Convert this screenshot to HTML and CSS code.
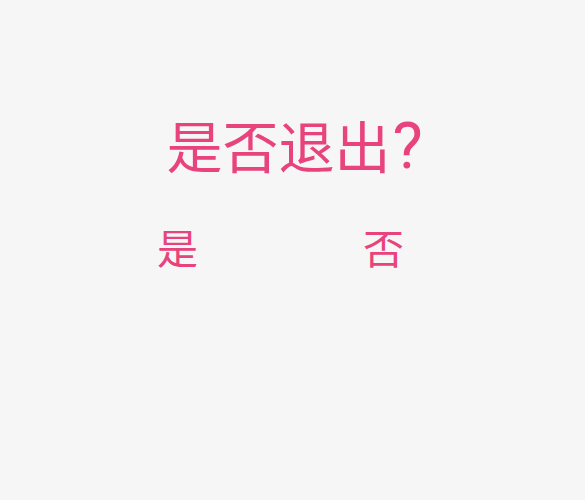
FILE: index.html
```html
<!DOCTYPE html>
<html lang="zh-CN">
<head>
<meta charset="utf-8">
<link rel="stylesheet" href="styles.css">
</head>
<body>
<div class="dialog">
  <h1 class="title">是否退出<span class="qmark">?</span></h1>
  <div class="actions">
    <button class="btn btn-yes">是</button>
    <button class="btn btn-no">否</button>
  </div>
</div>
</body>
</html>
```
FILE: styles.css
```css
html, body {
  margin: 0;
  padding: 0;
  width: 585px;
  height: 500px;
  background: #f6f6f6;
  font-family: "Noto Sans CJK SC", "Noto Sans", sans-serif;
  color: #e8437c;
}
.dialog {
  display: flex;
  flex-direction: column;
  align-items: center;
  padding-top: 104px;
}
.title {
  margin: 0;
  font-size: 56px;
  font-weight: 400;
  line-height: 80px;
  text-align: center;
  padding-left: 4px;
}
.qmark {
  font-family: Roboto, "Noto Sans", sans-serif;
  font-size: 64px;
  line-height: 0;
  margin-left: 2px;
}
.actions {
  display: flex;
  width: 100%;
  box-sizing: border-box;
  padding-left: 157px;
  gap: 165px;
  margin-top: 32px;
}
.btn {
  background: none;
  border: none;
  padding: 0;
  font-family: inherit;
  color: inherit;
  font-size: 41px;
  line-height: 60px;
}
```
